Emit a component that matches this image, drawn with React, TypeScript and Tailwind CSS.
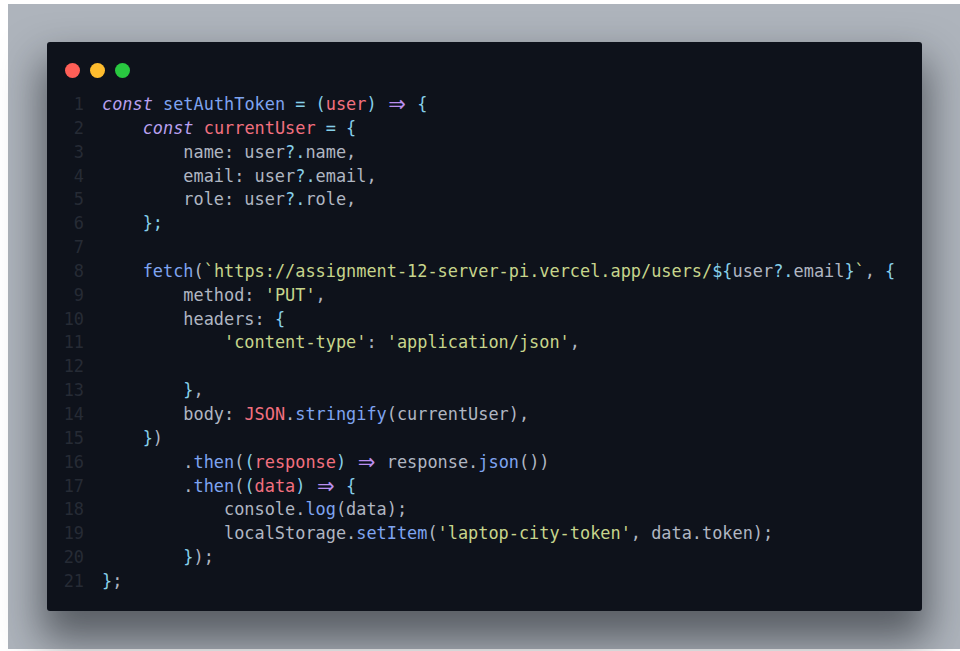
import React from "react";

type Tok = [string, string];

const cls: Record<string, string> = {
  k: "italic text-[#b9a0ef]",
  f: "text-[#7fa4f0]",
  v: "text-[#f2707f]",
  p: "text-[#86cfe9]",
  t: "text-[#b0b6c2]",
  s: "text-[#c7d58c]",
  a: "text-[#bb8ff0]",
};

const code: Tok[][] = [
  [["const", "k"], [" ", "t"], ["setAuthToken", "f"], [" = (", "p"], ["user", "v"], [")", "p"], [" ", "t"], ["=>", "a"], [" {", "p"]],
  [["    ", "t"], ["const", "k"], [" ", "t"], ["currentUser", "v"], [" = {", "p"]],
  [["        name: user", "t"], ["?.", "p"], ["name,", "t"]],
  [["        email: user", "t"], ["?.", "p"], ["email,", "t"]],
  [["        role: user", "t"], ["?.", "p"], ["role,", "t"]],
  [["    };", "p"]],
  [],
  [["    ", "t"], ["fetch", "f"], ["(", "t"], ["`https://assignment-12-server-pi.vercel.app/users/", "s"], ["${", "p"], ["user", "t"], ["?.", "p"], ["email", "t"], ["}", "p"], ["`", "s"], [", ", "t"], ["{", "p"]],
  [["        method: ", "t"], ["'PUT'", "s"], [",", "t"]],
  [["        headers: ", "t"], ["{", "p"]],
  [["            ", "t"], ["'content-type'", "s"], [": ", "t"], ["'application/json'", "s"], [",", "t"]],
  [],
  [["        ", "t"], ["}", "p"], [",", "t"]],
  [["        body: ", "t"], ["JSON", "v"], [".", "t"], ["stringify", "f"], ["(currentUser),", "t"]],
  [["    ", "t"], ["}", "p"], [")", "t"]],
  [["        .", "t"], ["then", "f"], ["(", "t"], ["(", "p"], ["response", "v"], [")", "p"], [" ", "t"], ["=>", "a"], [" response.", "t"], ["json", "f"], ["())", "t"]],
  [["        .", "t"], ["then", "f"], ["(", "t"], ["(", "p"], ["data", "v"], [")", "p"], [" ", "t"], ["=>", "a"], [" ", "t"], ["{", "p"]],
  [["            console.", "t"], ["log", "f"], ["(data);", "t"]],
  [["            localStorage.", "t"], ["setItem", "f"], ["(", "t"], ["'laptop-city-token'", "s"], [", data.token);", "t"]],
  [["        ", "t"], ["}", "p"], [");", "t"]],
  [["}", "p"], [";", "t"]],
];

function Line({ toks }: { toks: Tok[] }) {
  return (
    <div className="whitespace-pre h-[23.85px]">
      {toks.map(([text, kind], i) =>
        kind === "a" ? (
          <span
            key={i}
            className={"inline-block w-[2ch] text-center align-top " + cls.a}
          >
            <span className="font-['DejaVu_Sans',sans-serif] text-[21px] leading-[23px]">⇒</span>
          </span>
        ) : (
          <span key={i} className={cls[kind]}>
            {text}
          </span>
        )
      )}
    </div>
  );
}

export default function App() {
  return (
    <div className="w-[960px] h-[651px] bg-white pt-[4px] pl-[8px]">
      <div className="h-[645px] w-[952px] bg-[#aeb4bc] pt-[38px] pl-[39px]">
        <div className="w-[875px] h-[569px] rounded-[3px] bg-[#0e121b] shadow-[0_24px_40px_6px_rgba(20,24,30,0.55)] pt-[21px]">
          <div className="flex gap-[10px] pl-[18px]">
            <div className="w-[15px] h-[15px] rounded-full bg-[#fe5f57]" />
            <div className="w-[15px] h-[15px] rounded-full bg-[#febc2e]" />
            <div className="w-[15px] h-[15px] rounded-full bg-[#29c840]" />
          </div>
          <div
            className="flex mt-[15px] text-[16.9px] leading-[23.85px]"
            style={{ fontFamily: '"DejaVu Sans Mono", "Liberation Mono", monospace' }}
          >
            <div className="w-[37px] text-right text-[#262b35]">
              {code.map((_, i) => (
                <div key={i} className="h-[23.85px]">
                  {i + 1}
                </div>
              ))}
            </div>
            <div className="pl-[18px]">
              {code.map((toks, i) => (
                <Line key={i} toks={toks} />
              ))}
            </div>
          </div>
        </div>
      </div>
    </div>
  );
}
